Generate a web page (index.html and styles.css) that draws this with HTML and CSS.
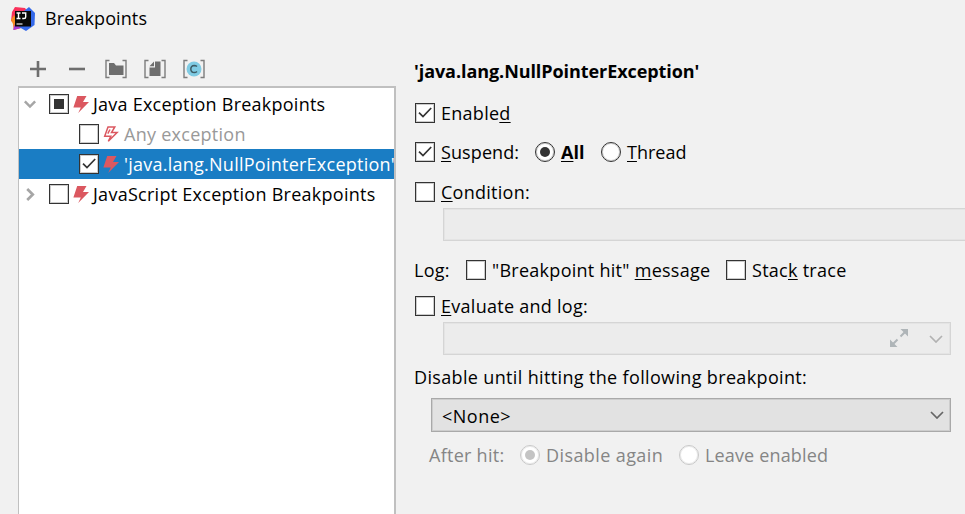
FILE: index.html
```html
<!DOCTYPE html>
<html lang="en">
<head>
<meta charset="utf-8">
<title>Breakpoints</title>
<link rel="stylesheet" href="styles.css">
</head>
<body>
<svg class="defs" width="0" height="0" aria-hidden="true">
  <symbol id="bolt" viewBox="0 0 16 17"><path d="M4.200 0h9.300L10 6h6L5.200 17l2.600-5.600H.4z"/></symbol>
  <symbol id="tick" viewBox="0 0 20 20"><path d="M4 9.600l4 4L16.200 5" fill="none" stroke="#333" stroke-width="1.700"/></symbol>
  <symbol id="chevron" viewBox="0 0 14 8"><path d="M1 1l6 6 6-6" fill="none" stroke="currentColor" stroke-width="1.700"/></symbol>
</svg>
<div class="dialog">
  <header class="titlebar">
    <svg class="logo" viewBox="0 0 24 24">
      <path d="M1 5L4 0l10 1 5 7-9 13-7 2-1-8-2-1z" fill="#fa315b"/>
      <path d="M0 13l3-5 5 9-5 6-1-6z" fill="#f88a20"/>
      <path d="M2 23l2-6 6 4z" fill="#a43bd8"/>
      <path d="M13 4l5-4 6 6-.5 12L15 24l-7-4z" fill="#3469ea"/>
      <path d="M4 4h16v15.500H4z" fill="#090909"/>
      <path d="M5.500 6h4M7.500 6v5.500M5.500 11.500h4M11 6h3.700v4q0 1.500-1.700 1.500h-1.800" fill="none" stroke="#fff" stroke-width="1.400"/>
      <path d="M5.500 17H11.500" stroke="#fff" stroke-width="1.100"/>
    </svg>
    <h1 class="title"><span class="t t-title">Breakpoints</span></h1>
  </header>
  <main class="columns">
    <section class="left">
      <div class="toolbar">
        <svg class="tool" viewBox="0 0 22 20"><path d="M3 10h16M11 2v16" stroke="#6e6e6e" stroke-width="2.600"/></svg>
        <svg class="tool" viewBox="0 0 22 20"><path d="M3 10h16" stroke="#6e6e6e" stroke-width="2.600"/></svg>
        <svg class="tool" viewBox="0 0 22 20"><path d="M4.500 1.500H1v17h3.500M17.500 1.500H21v17h-3.500" fill="none" stroke="#7d7d7d" stroke-width="1.400"/><path d="M4 4h5l2 2.500h7.500V16H4z" fill="#6e6e6e"/></svg>
        <svg class="tool" viewBox="0 0 22 20"><path d="M4.500 1.500H1v17h3.500M17.500 1.500H21v17h-3.500" fill="none" stroke="#7d7d7d" stroke-width="1.400"/><path d="M11 2.500h5.500V17H5.500V8.500H11zM5.500 7.300L10 2.500v4.800z" fill="#6e6e6e"/></svg>
        <svg class="tool" viewBox="0 0 22 20"><path d="M4.500 1.500H1v17h3.500M17.500 1.500H21v17h-3.500" fill="none" stroke="#7d7d7d" stroke-width="1.400"/><circle cx="11" cy="10" r="7.500" fill="#7fcbe3"/><path d="M14 7.500Q12.800 6.400 11.300 6.400 7.900 6.500 7.800 10q.1 3.500 3.500 3.600 1.500 0 2.700-1.100" fill="none" stroke="#3d5c66" stroke-width="1.500"/></svg>
      </div>
      <div class="tree">
        <div class="node"><svg class="arrow open" viewBox="0 0 14 8"><path d="M1 1l6 6 6-6"/></svg><span class="check partial"></span><svg class="bolt"><use href="#bolt"/></svg><span class="t t-java">Java Exception Breakpoints</span></div>
        <div class="node child any"><span class="check"></span><svg class="bolt hollow" viewBox="0 0 16 17"><path d="M5 .9h6.800L8.500 6.600h5.600L5.300 15.300l2.500-5H1.700zM4.800 7.700L7 3.500"/></svg><span class="t t-any">Any exception</span></div>
        <div class="node child selected"><span class="check"><svg><use href="#tick"/></svg></span><svg class="bolt"><use href="#bolt"/></svg><span class="t t-npe">'java.lang.NullPointerException'</span></div>
        <div class="node"><svg class="arrow closed" viewBox="0 0 8 14"><path d="M1 1l6 6-6 6"/></svg><span class="check"></span><svg class="bolt"><use href="#bolt"/></svg><span class="t t-js">JavaScript Exception Breakpoints</span></div>
      </div>
    </section>
    <section class="right">
      <h2 class="heading"><span class="t t-head">'java.lang.NullPointerException'</span></h2>
      <div class="row enabled"><span class="check"><svg><use href="#tick"/></svg></span><span class="t t-enabled">Enable<u>d</u></span></div>
      <div class="row suspend"><span class="check"><svg><use href="#tick"/></svg></span><span class="t t-suspend"><u>S</u>uspend:</span><span class="radio on"></span><b class="t t-all"><u>A</u>ll</b><span class="radio"></span><span class="t t-thread"><u>T</u>hread</span></div>
      <div class="row condition"><span class="check"></span><span class="t t-cond"><u>C</u>ondition:</span></div>
      <div class="field wide"></div>
      <div class="row log"><span class="t t-log">Log:</span><span class="check"></span><span class="t t-hit">"Breakpoint hit" <u>m</u>essage</span><span class="check"></span><span class="t t-stack">Stac<u>k</u> trace</span></div>
      <div class="row evaluate"><span class="check"></span><span class="t t-eval"><u>E</u>valuate and log:</span></div>
      <div class="field combo"><svg class="expand" viewBox="0 0 18 18"><path d="M10.500 7.500L15 3M7.500 10.500L3 15" stroke="#afb5b8" stroke-width="2"/><path d="M10.500 0H18v7.500zM0 10.500V18h7.500z" fill="#afb5b8"/></svg><svg class="chev"><use href="#chevron"/></svg></div>
      <div class="row until"><span class="t t-until">Disable until hitting the following breakpoint:</span></div>
      <div class="select"><span class="t t-none">&lt;None&gt;</span><svg class="chev"><use href="#chevron"/></svg></div>
      <div class="row after"><span class="t t-after">After hit:</span><span class="radio on"></span><span class="t t-again">Disable again</span><span class="radio"></span><span class="t t-leave">Leave enabled</span></div>
    </section>
  </main>
</div>
</body>
</html>
```
FILE: styles.css
```css
* { box-sizing: border-box; }
body { margin: 0; width: 965px; height: 514px; overflow: hidden; background: #f1f1f1; color: #000; font: 18px/30px "Open Sans", "Noto Sans", sans-serif; letter-spacing: .27px; }
h1, h2 { margin: 0; font-size: inherit; font-weight: 400; }
svg { display: block; flex: none; }
.defs { position: absolute; }
.t { flex: none; white-space: nowrap; }
u { text-decoration-thickness: 1px; text-underline-offset: 2px; text-decoration-skip-ink: none; }
.dialog { height: 514px; }
.titlebar { display: flex; align-items: center; height: 38px; padding-left: 11px; gap: 10px; }
.title { padding-bottom: 2px; }
.logo { width: 24px; height: 24px; }
.columns { display: flex; height: 476px; }
.left { width: 396px; padding-left: 18px; display: flex; flex-direction: column; }
.toolbar { height: 48px; display: flex; gap: 17px; padding: 21px 0 0 9px; }
.tool { width: 22px; height: 20px; }
.tree { flex: 1; background: #fff; border: 2px solid #c0c0c0; border-bottom: 0; border-left-width: 1px; padding-top: 1px; overflow: hidden; }
.node { height: 30px; display: flex; align-items: center; padding-left: 5px; }
.child { padding-left: 60px; }
.arrow { fill: none; stroke: #a6a6a6; stroke-width: 2.900; overflow: visible; }
.open { width: 12px; height: 8px; margin-right: 13px; }
.closed { width: 8px; height: 13px; margin: 0 15px 0 2px; }
.check { width: 20px; height: 20px; flex: none; border: 1px solid #333; background: #fff; box-shadow: inset 0 0 0 1px #33333340; display: flex; }
.check svg { width: 20px; height: 20px; margin: -1px; }
.partial::before { content: ""; width: 10px; height: 10px; margin: 4px; background: #333; }
.bolt { width: 16px; height: 17px; fill: #db5860; margin: 0 4px; }
.hollow { fill: none; stroke: #db5860; stroke-width: 1.500; }
.any .t { color: #999; }
.selected { background: #1a7dc4; color: #fff; }
.right { flex: 1; min-width: 0; padding-left: 19px; display: flex; flex-direction: column; }
.heading { margin: 18px 0 0 -1px; height: 30px; font-weight: 700; }
.row { display: flex; align-items: center; height: 30px; flex: none; }
.row .check { margin-right: 6px; }
.radio { width: 20px; height: 20px; flex: none; border: 1px solid #333; border-radius: 50%; background: #fff; box-shadow: inset 0 0 0 1px #33333340; display: flex; align-items: center; justify-content: center; margin-right: 6px; }
.radio.on::before { content: ""; width: 10px; height: 10px; border-radius: 50%; background: #333; }
.enabled { margin-top: 12px; }
.suspend { margin-top: 9px; }
.condition { margin-top: 10px; }
.field { flex: none; height: 33px; margin-left: 28px; background: #ececec; border: 1px solid #d5d5d5; box-shadow: inset 0 0 0 1px #e4e4e4; }
.wide { margin-top: 1px; margin-right: -2px; }
.log { margin: 14px 0 0 -1px; }
.evaluate { margin-top: 6px; }
.combo, .select { display: flex; align-items: center; margin-right: 14px; }
.combo { margin-top: 1px; justify-content: flex-end; color: #b2b2b2; padding-right: 7px; }
.expand { width: 18px; height: 18px; margin-right: 21px; margin-bottom: 2px; }
.chev { width: 14px; height: 8px; }
.until { margin: 7px 0 0 -1px; }
.select { flex: none; height: 34px; margin-top: 6px; margin-left: 16px; background: #e2e2e2; border: 1px solid #a9a9a9; box-shadow: inset 0 0 0 1px #cdcdcd; padding: 0 6px 0 10px; justify-content: space-between; }
.select .chev { color: #666; }
.after { margin-top: 8px; padding-left: 14px; color: #858585; }
.after .radio { border-color: #c8c8c8; box-shadow: inset 0 0 0 1px #c8c8c860; }
.after .radio.on::before { background: #c4c4c4; }
.t-title { letter-spacing: .1px; }
.t-java { letter-spacing: .24px; }
.t-any { margin-left: 1px; }
.t-npe { margin-left: 1px; letter-spacing: .25px; }
.t-head { letter-spacing: -.07px; }
.t-suspend { width: 94px; letter-spacing: .1px; }
.t-all { width: 40px; letter-spacing: 0; }
.t-thread { letter-spacing: 0; }
.t-log { width: 52px; }
.t-hit { width: 234px; }
.t-until { letter-spacing: .35px; }
.t-none { padding-top: 2px; letter-spacing: .5px; }
.t-after { width: 91px; }
.t-again { width: 133px; letter-spacing: .4px; }
.t-leave { letter-spacing: .15px; }
```
